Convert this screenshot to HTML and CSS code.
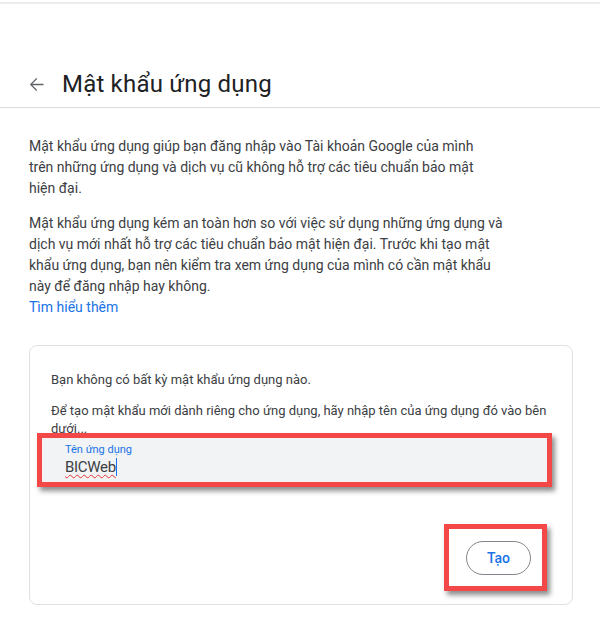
FILE: index.html
```html
<!DOCTYPE html>
<html lang="vi">
<head>
<meta charset="utf-8">
<title>Mật khẩu ứng dụng</title>
<link rel="stylesheet" href="styles.css">
</head>
<body>
<div class="topline"></div>
<header class="header">
  <div class="header-row">
    <svg class="back" viewBox="0 0 24 24" width="21" height="21" aria-hidden="true"><path d="M20 11.25H7.2l5.6-5.6L11.8 4.6 4.4 12l7.4 7.4 1.05-1.05-5.6-5.6H20z" fill="#5f6368"/></svg>
    <h1 class="title">Mật khẩu ứng dụng</h1>
  </div>
</header>
<main class="content">
  <p class="para">Mật khẩu ứng dụng giúp bạn đăng nhập vào Tài khoản Google của mình<br>trên những ứng dụng và dịch vụ cũ không hỗ trợ các tiêu chuẩn bảo mật<br>hiện đại.</p>
  <p class="para para2">Mật khẩu ứng dụng kém an toàn hơn so với việc sử dụng những ứng dụng và<br>dịch vụ mới nhất hỗ trợ các tiêu chuẩn bảo mật hiện đại. Trước khi tạo mật<br>khẩu ứng dụng, bạn nên kiểm tra xem ứng dụng của mình có cần mật khẩu<br>này để đăng nhập hay không.<br><a class="link" href="#">Tìm hiểu thêm</a></p>
  <section class="card">
    <p class="card-text">Bạn không có bất kỳ mật khẩu ứng dụng nào.</p>
    <p class="card-text card-text2">Để tạo mật khẩu mới dành riêng cho ứng dụng, hãy nhập tên của ứng dụng đó vào bên<br>dưới...</p>
    <div class="highlight field-mark">
      <div class="field">
        <span class="field-label">Tên ứng dụng</span>
        <span class="field-value"><span class="misspelled">BICWeb</span><span class="caret"></span></span>
      </div>
    </div>
    <div class="actions">
      <div class="highlight btn-mark">
        <button class="btn" type="button">Tạo</button>
      </div>
    </div>
  </section>
</main>
</body>
</html>
```
FILE: styles.css
```css
html, body {
  margin: 0;
  padding: 0;
  background: #ffffff;
}
body {
  font-family: Roboto, "Noto Sans", Arial, sans-serif;
  color: #3c4043;
  width: 600px;
  height: 621px;
  overflow: hidden;
}
.topline {
  height: 2px;
  margin-top: 2px;
  background: #ececec;
}
.header {
  height: 104px;
  box-sizing: border-box;
  padding: 64px 0 0 26px;
  border-bottom: 1px solid #dadce0;
}
.header-row {
  display: flex;
  align-items: center;
  height: 32px;
}
.back {
  display: block;
  margin-right: 15px;
}
.title {
  margin: 0;
  font-size: 24px;
  line-height: 32px;
  font-weight: 400;
  color: #202124;
  letter-spacing: 0.2px;
}
.content {
  padding: 28px 0 0 29px;
}
.para {
  margin: 0;
  font-size: 14px;
  line-height: 21px;
  color: #3c4043;
}
.para2 {
  margin-top: 14px;
}
.link {
  color: #1a73e8;
  text-decoration: none;
}
.card {
  margin-top: 27px;
  width: 544px;
  height: 260px;
  box-sizing: border-box;
  border: 1px solid #e0e0e0;
  border-radius: 8px;
  padding: 25px 0 0 21px;
  display: flex;
  flex-direction: column;
}
.card-text {
  margin: 0;
  font-size: 13px;
  line-height: 18px;
  color: #3c4043;
}
.card-text2 {
  margin-top: 13px;
}
.highlight {
  border: 5px solid #f44848;
  box-shadow: 3px 4px 5px rgba(0, 0, 0, 0.45);
}
.field-mark {
  margin-left: -14px;
  width: 505px;
  margin-top: -5px;
}
.field {
  background: #f1f3f4;
  height: 44px;
  padding: 5px 0 0 23px;
  box-sizing: border-box;
  display: flex;
  flex-direction: column;
}
.field-label {
  font-size: 11px;
  line-height: 14px;
  color: #1a73e8;
}
.field-value {
  font-size: 15px;
  line-height: 20px;
  letter-spacing: -0.3px;
  color: #3c4043;
  display: flex;
  align-items: center;
}
.misspelled {
  text-decoration: underline wavy #e53935;
  text-decoration-thickness: 1px;
  text-underline-offset: 2px;
}
.caret {
  display: inline-block;
  width: 1px;
  height: 18px;
  background: #1a73e8;
}
.actions {
  display: flex;
  justify-content: flex-end;
  padding-right: 25px;
  margin-top: 37px;
}
.btn-mark {
  padding: 12px 11px 11px 17px;
}
.btn {
  display: block;
  box-sizing: border-box;
  width: 65px;
  height: 34px;
  border: 1px solid #80868b;
  border-radius: 17px;
  background: #ffffff;
  color: #1a73e8;
  font-family: Roboto, "Noto Sans", Arial, sans-serif;
  font-size: 14px;
  font-weight: 500;
  padding: 0;
}
```
